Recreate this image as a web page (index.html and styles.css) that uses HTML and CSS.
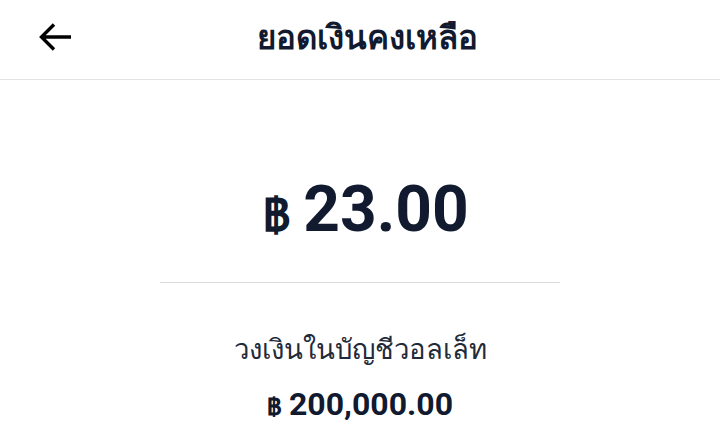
FILE: index.html
```html
<!DOCTYPE html>
<html lang="th">
<head>
<meta charset="utf-8">
<link rel="stylesheet" href="styles.css">
</head>
<body>
<header class="topbar">
  <button class="back" aria-label="back">
    <svg width="34" height="30" viewBox="0 0 34 30"><path d="M33 15H3.5M16 2.5L3.5 15 16 27.5" fill="none" stroke="#000" stroke-width="3.4"/></svg>
  </button>
  <h1 class="title">ยอดเงินคงเหลือ</h1>
</header>
<main class="content">
  <div class="balance"><span class="cur">฿</span><span class="amt">23.00</span></div>
  <hr class="divider">
  <div class="limit-label">วงเงินในบัญชีวอลเล็ท</div>
  <div class="limit"><span class="cur-s">฿</span><span class="amt-s">200,000.00</span></div>
</main>
</body>
</html>
```
FILE: styles.css
```css
* { box-sizing: border-box; }
body { margin: 0; background: #fff; font-family: Roboto, "Noto Sans", sans-serif; color: #111a2e; width: 720px; height: 447px; overflow: hidden; }
.topbar { height: 80px; padding-bottom: 4px; border-bottom: 1px solid #e3e3e3; display: flex; align-items: center; justify-content: center; position: relative; }
.back { position: absolute; left: 38px; top: 22px; background: none; border: 0; padding: 0; width: 34px; height: 30px; }
.title { margin: 0 0 0 14px; font-size: 33px; font-weight: 800; color: #111a2e; }
.content { display: flex; flex-direction: column; align-items: center; }
.balance { margin-top: 98px; margin-left: 12px; display: flex; align-items: baseline; gap: 13px; line-height: 1; }
.cur { font-size: 45px; font-weight: 700; }
.amt { font-size: 64px; font-weight: 700; }
.divider { width: 400px; border: 0; border-top: 1px solid #dcdcdc; margin: 40px 0 0; }
.limit-label { margin-top: 50px; font-size: 27.5px; color: #222a3a; line-height: 1.2; }
.limit { margin-top: 22px; display: flex; align-items: baseline; gap: 7px; line-height: 1; }
.cur-s { font-size: 24px; font-weight: 700; }
.amt-s { font-size: 32px; font-weight: 700; }
```
